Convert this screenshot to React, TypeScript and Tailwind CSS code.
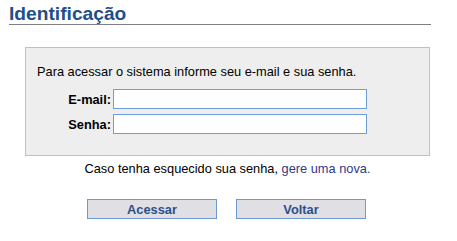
export default function App() {
  return (
    <div className="w-[457px] h-[241px] bg-white text-[12.8px] leading-[15px] text-black" style={{ fontFamily: '"Liberation Sans", Arial, sans-serif' }}>
      <div className="pt-[4px] pl-[9px]">
        <h1 className="w-[422px] border-b border-[#808080] text-[19.2px] leading-[20px] font-bold text-[#1f4e8c]">
          Identificação
        </h1>
      </div>

      <div className="mt-[22px] ml-[25px] w-[405px]">
        <div className="border border-[#c0c0c0] bg-[#eeeeee] pt-[16px] pb-[21px] pl-[11px]">
          <p>Para acessar o sistema informe seu e-mail e sua senha.</p>
          <div className="mt-[10px] flex flex-col gap-[5px]">
            <div className="flex items-center">
              <label className="w-[74px] text-right font-bold">E-mail:</label>
              <input type="text" className="ml-[2px] h-[20px] w-[254px] border border-[#6f9fd8] bg-white outline-none" />
            </div>
            <div className="flex items-center">
              <label className="w-[74px] text-right font-bold">Senha:</label>
              <input type="password" className="ml-[2px] h-[20px] w-[254px] border border-[#6f9fd8] bg-white outline-none" />
            </div>
          </div>
        </div>

        <p className="mt-[5px] text-center">
          Caso tenha esquecido sua senha, <a href="#" className="text-[#2d3a8c]">gere uma nova.</a>
        </p>

        <div className="mt-[23px] flex gap-[19px] pl-[62px]">
          <button className="h-[20px] w-[130px] border border-[#6d9bd1] bg-[#e0dfe3] font-bold text-[#2c4f8a]">
            Acessar
          </button>
          <button className="h-[20px] w-[130px] border border-[#6d9bd1] bg-[#e0dfe3] font-bold text-[#2c4f8a]">
            Voltar
          </button>
        </div>
      </div>
    </div>
  );
}
